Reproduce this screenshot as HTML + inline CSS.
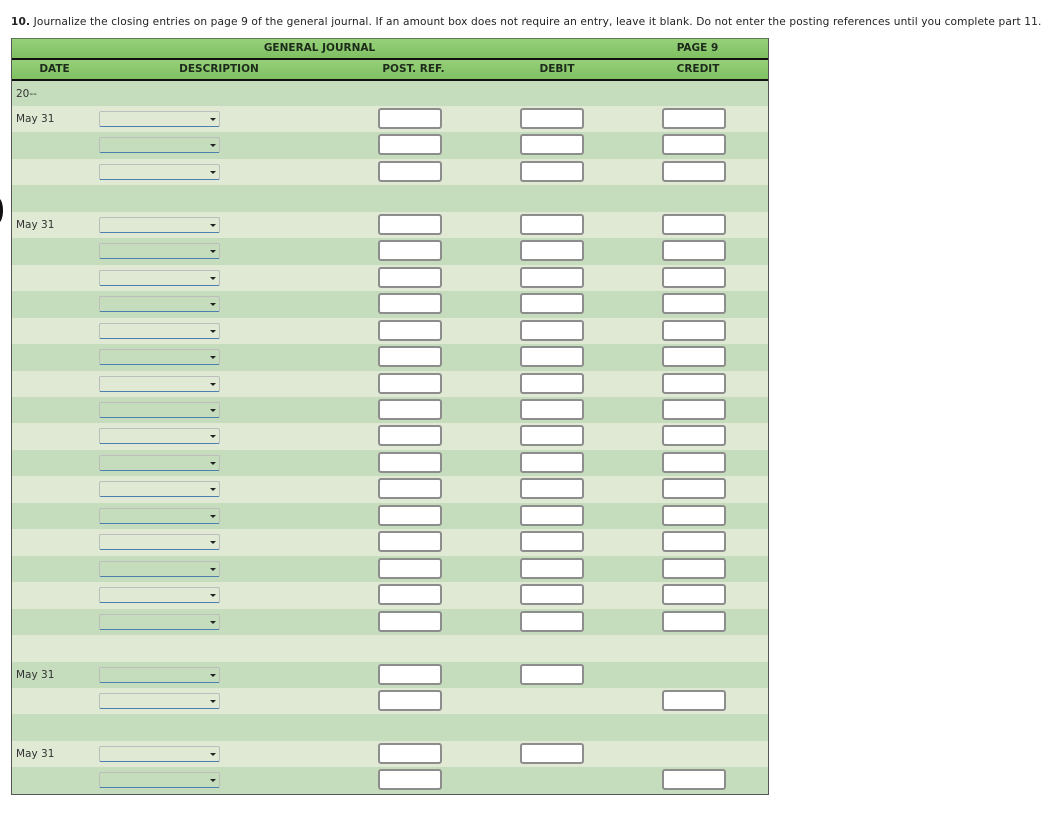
<!DOCTYPE html>
<html><head><meta charset="utf-8"><style>
body{margin:0;background:#fff;width:1052px;height:817px;position:relative;font-family:"DejaVu Sans",Verdana,sans-serif;color:#333;overflow:hidden}
.title{position:absolute;left:11px;top:16px;font-size:10.6px;letter-spacing:0.12px;white-space:nowrap;color:#222}
.t{position:absolute;left:11px;top:38px;width:756px;border:1px solid #555;border-top:1px solid #5a7a50}
.h1,.h2{position:relative;height:19px;background:linear-gradient(#96d07a,#7fc062);font-weight:bold;font-size:10.5px;color:#1d2b1a}
.h1{border-bottom:2px solid #111}
.h2{border-bottom:2px solid #111}
.h1 span,.h2 span{position:absolute;top:3px;text-align:center}
.r{position:relative;height:26.46px}
.r0{height:25px}
.d{background:#c5ddbc}.l{background:#dfe9d3}
.dt{position:absolute;left:4px;top:7px;font-size:10.5px;color:#333}
.s{position:absolute;left:87px;top:5px;width:119px;height:14px;border:1px solid #bdbdbd;border-bottom:1px solid #4a7fb0;border-radius:2px}
.s:after{content:"";position:absolute;right:3px;top:6px;border-left:3px solid transparent;border-right:3px solid transparent;border-top:3px solid #222}
.i{position:absolute;top:2px;width:60px;height:17px;background:#fff;border:2px solid #8d8d8d;border-radius:3px}
.a{left:366px}.b{left:508px}.c{left:650px}
.mark{position:absolute;left:-7px;top:198px;width:10px;height:25px;border-radius:50%;background:#111}
</style></head><body>
<div class="title"><b>10.</b> Journalize the closing entries on page 9 of the general journal. If an amount box does not require an entry, leave it blank. Do not enter the posting references until you complete part 11.</div>
<div class="mark"></div>
<div class="t">
<div class="h1"><span style="left:0;width:615px">GENERAL JOURNAL</span><span style="left:615px;width:141px">PAGE 9</span></div>
<div class="h2"><span style="left:0;width:85px">DATE</span><span style="left:85px;width:244px">DESCRIPTION</span><span style="left:329px;width:145px">POST. REF.</span><span style="left:474px;width:142px">DEBIT</span><span style="left:616px;width:140px">CREDIT</span></div>
<div class="r r0 d"><span class="dt">20--</span></div>
<div class="r l"><span class="dt">May 31</span><div class="s"></div><div class="i a"></div><div class="i b"></div><div class="i c"></div></div>
<div class="r d"><div class="s"></div><div class="i a"></div><div class="i b"></div><div class="i c"></div></div>
<div class="r l"><div class="s"></div><div class="i a"></div><div class="i b"></div><div class="i c"></div></div>
<div class="r d"></div>
<div class="r l"><span class="dt">May 31</span><div class="s"></div><div class="i a"></div><div class="i b"></div><div class="i c"></div></div>
<div class="r d"><div class="s"></div><div class="i a"></div><div class="i b"></div><div class="i c"></div></div>
<div class="r l"><div class="s"></div><div class="i a"></div><div class="i b"></div><div class="i c"></div></div>
<div class="r d"><div class="s"></div><div class="i a"></div><div class="i b"></div><div class="i c"></div></div>
<div class="r l"><div class="s"></div><div class="i a"></div><div class="i b"></div><div class="i c"></div></div>
<div class="r d"><div class="s"></div><div class="i a"></div><div class="i b"></div><div class="i c"></div></div>
<div class="r l"><div class="s"></div><div class="i a"></div><div class="i b"></div><div class="i c"></div></div>
<div class="r d"><div class="s"></div><div class="i a"></div><div class="i b"></div><div class="i c"></div></div>
<div class="r l"><div class="s"></div><div class="i a"></div><div class="i b"></div><div class="i c"></div></div>
<div class="r d"><div class="s"></div><div class="i a"></div><div class="i b"></div><div class="i c"></div></div>
<div class="r l"><div class="s"></div><div class="i a"></div><div class="i b"></div><div class="i c"></div></div>
<div class="r d"><div class="s"></div><div class="i a"></div><div class="i b"></div><div class="i c"></div></div>
<div class="r l"><div class="s"></div><div class="i a"></div><div class="i b"></div><div class="i c"></div></div>
<div class="r d"><div class="s"></div><div class="i a"></div><div class="i b"></div><div class="i c"></div></div>
<div class="r l"><div class="s"></div><div class="i a"></div><div class="i b"></div><div class="i c"></div></div>
<div class="r d"><div class="s"></div><div class="i a"></div><div class="i b"></div><div class="i c"></div></div>
<div class="r l"></div>
<div class="r d"><span class="dt">May 31</span><div class="s"></div><div class="i a"></div><div class="i b"></div></div>
<div class="r l"><div class="s"></div><div class="i a"></div><div class="i c"></div></div>
<div class="r d"></div>
<div class="r l"><span class="dt">May 31</span><div class="s"></div><div class="i a"></div><div class="i b"></div></div>
<div class="r d"><div class="s"></div><div class="i a"></div><div class="i c"></div></div>
</div>
</body></html>
